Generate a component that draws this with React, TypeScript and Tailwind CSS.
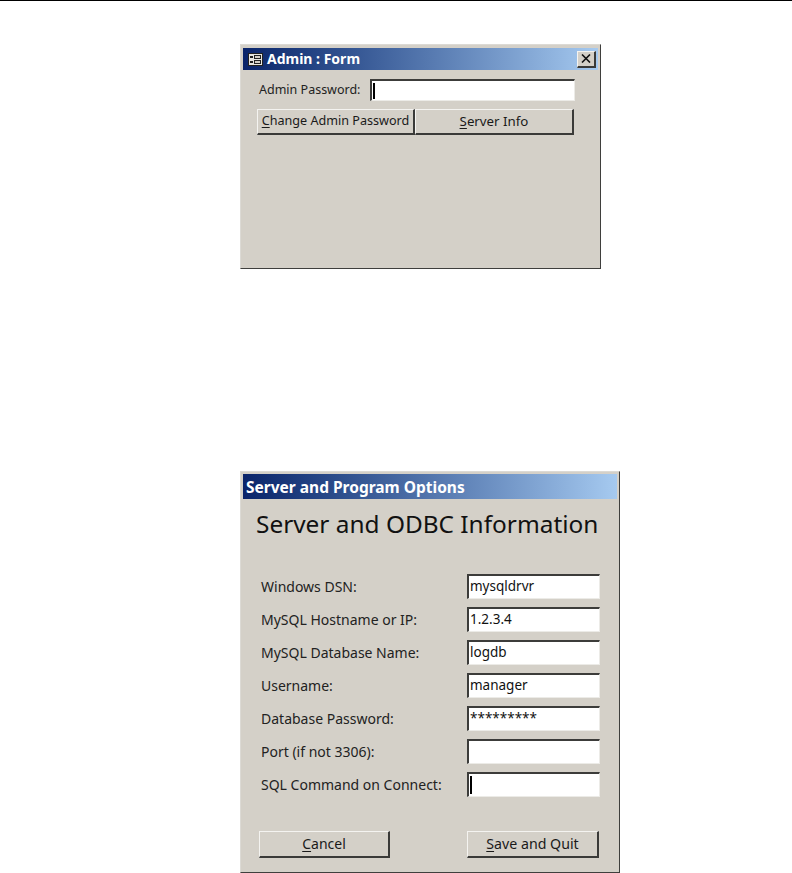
import React from 'react';

const fontClass = "font-['Noto_Sans',sans-serif]";
const raised =
  'border-t border-l border-b-2 border-r-2 border-t-[#f4f3f0] border-l-[#f4f3f0] border-b-[#3a3a38] border-r-[#3a3a38]';
const sunken =
  'border-t-2 border-l-2 border-b border-r border-t-[#3c3c3a] border-l-[#3c3c3a] border-b-[#ecebe7] border-r-[#ecebe7]';

const Key: React.FC<{ children: React.ReactNode }> = ({ children }) => (
  <span className="underline underline-offset-2">{children}</span>
);

const Btn: React.FC<{ className: string; children: React.ReactNode }> = ({ className, children }) => (
  <div className={`flex items-center justify-center whitespace-nowrap bg-[#d4d0c8] leading-none text-[#1a1a1a] ${raised} ${className}`}>
    {children}
  </div>
);

const Window: React.FC<{ className: string; children: React.ReactNode }> = ({ className, children }) => (
  <div className={`flex flex-col bg-[#d4d0c8] px-[2px] pt-[2px] border border-t-[#dcdad5] border-l-[#dcdad5] border-b-[#3f3f3d] border-r-[#3f3f3d] ${className}`}>
    {children}
  </div>
);

const fields = [
  { label: 'Windows DSN:', value: 'mysqldrvr' },
  { label: 'MySQL Hostname or IP:', value: '1.2.3.4' },
  { label: 'MySQL Database Name:', value: 'logdb' },
  { label: 'Username:', value: 'manager' },
  { label: 'Database Password:', value: '*********' },
  { label: 'Port (if not 3306):', value: '' },
  { label: 'SQL Command on Connect:', value: '', caret: true }
];

const App: React.FC = () => {
  return (
    <div className={`h-[873px] w-[792px] overflow-hidden bg-white ${fontClass}`}>
      <div className="h-px bg-black" />

      <Window className="ml-[240px] mt-[43px] h-[225px] w-[361px]">
        <div className="mt-px flex h-[22px] items-center bg-gradient-to-r from-[#0a246a] to-[#a6caf0] pl-[5px] pr-[2px]">
          <svg width="15" height="13" viewBox="0 0 15 13" className="mr-[4px]">
            <rect x="0.5" y="0.5" width="14" height="12" fill="#e8e6e0" stroke="#222" />
            <rect x="2" y="3" width="3" height="2" fill="#222" />
            <rect x="2" y="8" width="3" height="2" fill="#222" />
            <rect x="6.5" y="2.5" width="6" height="3" fill="#d4d0c8" stroke="#222" />
            <rect x="6.5" y="7.5" width="6" height="3" fill="#d4d0c8" stroke="#222" />
          </svg>
          <span className="text-[14px] font-bold leading-none text-white">Admin : Form</span>
          <div className={`ml-auto flex h-[17px] w-[19px] items-center justify-center bg-[#d4d0c8] ${raised}`}>
            <svg width="10" height="9" viewBox="0 0 10 9">
              <path d="M1 0.5 L9 8.5 M9 0.5 L1 8.5" stroke="#111" strokeWidth="1.6" />
            </svg>
          </div>
        </div>

        <div className="flex items-center pl-[16px] pt-[9px]">
          <span className="w-[111px] whitespace-nowrap text-[12.5px] leading-none text-[#222]">Admin Password:</span>
          <div className={`flex h-[22px] w-[205px] items-center bg-white pl-px ${sunken}`}>
            <div className="h-[16px] w-[2px] bg-black" />
          </div>
        </div>

        <div className="flex pl-[14px] pt-[8px]">
          <Btn className="h-[26px] w-[158px] text-[12.6px]"><span><Key>C</Key>hange Admin Password</span></Btn>
          <Btn className="h-[26px] w-[159px] text-[13.3px]"><span><Key>S</Key>erver Info</span></Btn>
        </div>
      </Window>

      <Window className="ml-[240px] mt-[202px] h-[402px] w-[380px]">
        <div className="flex h-[25px] items-center bg-gradient-to-r from-[#0a246a] to-[#a6caf0] pl-[3px] pt-[2px]">
          <span className="text-[15.5px] font-bold leading-none text-white">Server and Program Options</span>
        </div>

        <div className="whitespace-nowrap pl-[13px] pt-[10px] text-[24.4px] leading-[30px] text-[#111]">Server and ODBC Information</div>

        <div className="flex flex-col gap-[8px] pl-[18px] pt-[35px]">
          {fields.map((f) => (
            <div key={f.label} className="flex h-[25px] items-center">
              <span className="w-[206px] whitespace-nowrap text-[14px] leading-none text-[#222]">{f.label}</span>
              <div className={`flex h-[25px] w-[133px] items-center bg-white pl-px text-[13.5px] leading-none text-[#111] ${sunken}`}>
                {f.caret ? <div className="h-[18px] w-[2px] bg-black" /> : f.value}
              </div>
            </div>
          ))}
        </div>

        <div className="flex justify-between pl-[16px] pr-[18px] pt-[34px]">
          <Btn className="h-[27px] w-[131px] text-[14px]"><span><Key>C</Key>ancel</span></Btn>
          <Btn className="h-[27px] w-[132px] text-[14.2px]"><span><Key>S</Key>ave and Quit</span></Btn>
        </div>
      </Window>
    </div>
  );
};

export default App;
